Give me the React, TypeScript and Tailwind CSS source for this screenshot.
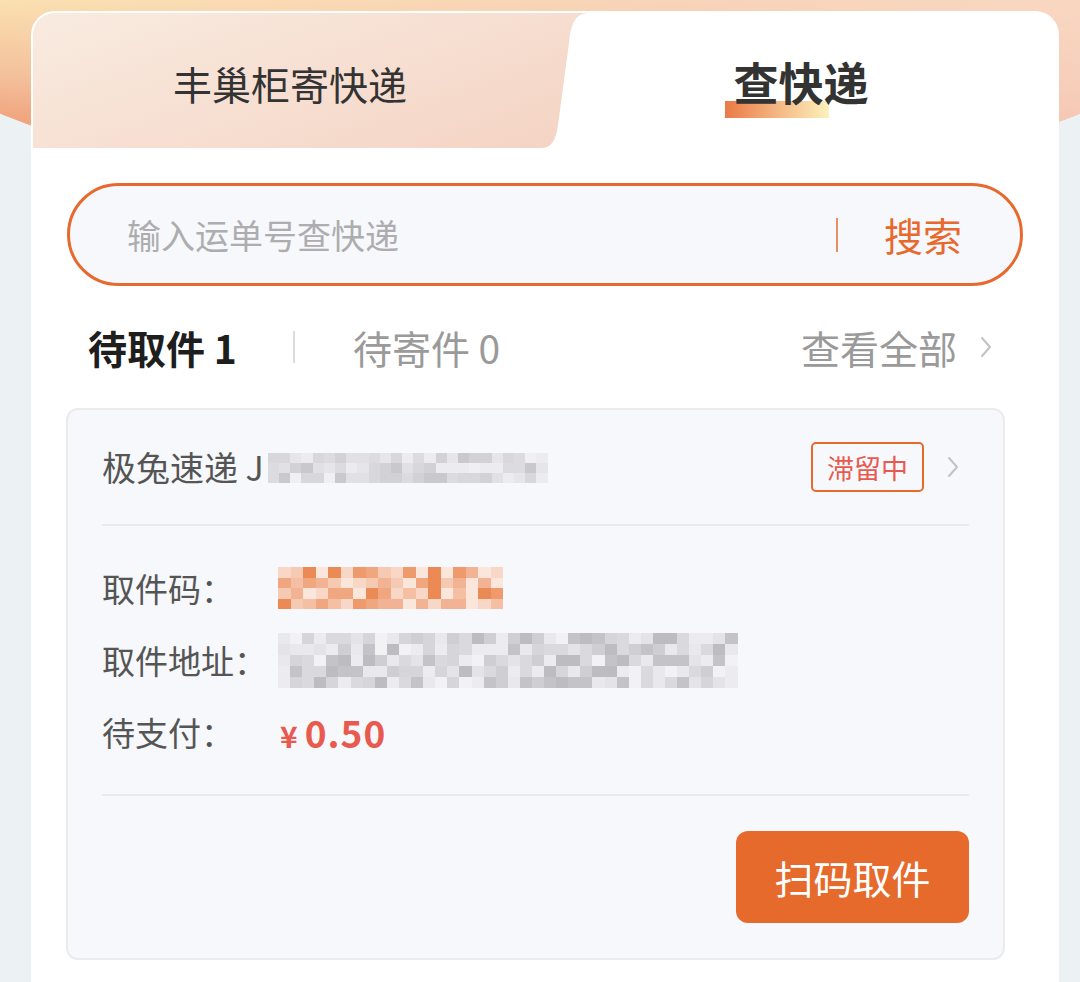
import React from 'react'

const GRIS = ['#e4e4e8', '#d6d6da', '#cfcfd3', '#c4c4c8', '#ececf0', '#dadade', '#bdbdc1', '#e9e9ed', '#f2f2f5']
const GRIS_CLAIR = ['#e6e6ea', '#dcdce0', '#d2d2d6', '#ececf0', '#e1e1e5', '#c9c9cd', '#f0f0f3', '#d8d8dc']
const ORANGE = ['#ee9a6c', '#f0a780', '#f4bfa3', '#f8d7c6', '#ec8a55', '#f2b394', '#fbe6dc', '#f5c9b2']

function Mosaique({ cols, rows, w, h, palette, seed }: { cols: number; rows: number; w: number; h: number; palette: string[]; seed: number }) {
  let s = seed
  const rnd = () => {
    s = (s * 9301 + 49297) % 233280
    return s / 233280
  }
  return (
    <div className="flex flex-col">
      {Array.from({ length: rows }).map((_, r) => (
        <div key={r} className="flex">
          {Array.from({ length: cols }).map((_, c) => (
            <div key={c} style={{ width: w, height: h, background: palette[Math.floor(rnd() * palette.length)] }} />
          ))}
        </div>
      ))}
    </div>
  )
}

function Chevron({ className }: { className?: string }) {
  return (
    <svg width="14" height="24" viewBox="0 0 14 24" fill="none" className={className}>
      <polyline points="3,3 11,12 3,21" stroke="#c2c2c6" strokeWidth="2" strokeLinecap="round" strokeLinejoin="round" />
    </svg>
  )
}

export default function App() {
  return (
    <div className="relative w-[1080px] h-[982px] overflow-hidden bg-[#ecf2f3] font-['Noto_Sans_CJK_SC','Noto_Sans',sans-serif]">
      {/* fond dégradé du haut */}
      <div className="absolute top-[-154px] left-[-100px] right-[-100px] h-[348px] rounded-b-[50%] bg-[linear-gradient(180deg,#fbe2b0_154px,#f3bf98_230px,#ef9f76_275px)]" />
      <div className="absolute top-[-154px] left-[-100px] right-[-100px] h-[348px] rounded-b-[50%] bg-[linear-gradient(90deg,rgba(250,226,180,0)_0%,rgba(246,205,188,0.7)_60%,rgba(248,214,200,0.8)_100%)]" />

      <div className="relative ml-[31px] mr-[21px] mt-[11px] h-[1000px] rounded-[24px] bg-white p-[2px]">
        {/* onglets */}
        <div className="flex h-[135px]">
          <div className="w-[556px] shrink-0 flex items-center justify-center pr-[42px] pt-[6px] bg-[linear-gradient(160deg,#f9ebe0_0%,#f6ddcf_60%,#f4d3c3_100%)] [clip-path:path('M22_0_H556_C544_0_538_8_536_30_L525_112_C523_128_518_135_508_135_H0_V22_C0_10_10_0_22_0_Z')]">
            <span className="text-[39px] leading-none text-[#333]">丰巢柜寄快递</span>
          </div>
          <div className="flex-1 flex items-center justify-center pr-[44px] pt-[1px]">
            <span className="relative text-[45px] leading-none font-bold text-[#333]">
              <span className="absolute left-[-8px] top-[42px] w-[104px] h-[17px] bg-[linear-gradient(90deg,#ea7a45_0%,#f3b07c_45%,#fdf1bd_100%)]" />
              <span className="relative">查快递</span>
            </span>
          </div>
        </div>

        {/* recherche */}
        <div className="mx-[34px] mt-[35px] h-[103px] rounded-full border-[3px] border-[#e8692e] bg-[#f7f8fb] flex items-center pl-[57px] pr-[58px]">
          <span className="flex-1 text-[34px] text-[#adadb0]">输入运单号查快递</span>
          <span className="w-[2px] h-[34px] bg-[#eb8f63]" />
          <span className="ml-[46px] text-[39px] text-[#e8692e]">搜索</span>
        </div>

        {/* filtres */}
        <div className="flex items-center mt-[40px] pl-[55px] pr-[64px] h-[42px]">
          <span className="text-[39px] font-bold text-[#1e1e1e] leading-none">待取件 1</span>
          <span className="ml-[56px] w-[2px] h-[32px] bg-[#dcdcdc]" />
          <span className="ml-[58px] text-[39px] text-[#9a9a9a] leading-none">待寄件 0</span>
          <span className="ml-auto text-[39px] text-[#9a9a9a] leading-none">查看全部</span>
          <Chevron className="ml-[22px]" />
        </div>

        {/* carte colis */}
        <div className="ml-[33px] mr-[52px] mt-[40px] rounded-[12px] border-[2px] border-[#ebebee] bg-[#f7f8fb] px-[34px] pb-[35px]">
          <div className="flex items-center h-[116px] border-b-[2px] border-[#eaeaec]">
            <span className="text-[34px] text-[#555] leading-none">极兔速递 J</span>
            <div className="ml-[4px] mt-[2px]">
              <Mosaique cols={25} rows={3} w={11.2} h={10} palette={GRIS_CLAIR} seed={17} />
            </div>
            <span className="ml-auto w-[113px] h-[50px] rounded-[5px] border-[2px] border-[#e8692e] flex items-center justify-center text-[27px] text-[#e85a4f] leading-none">滞留中</span>
            <Chevron className="ml-[22px] mr-[9px]" />
          </div>

          <div className="flex flex-col pt-[26px] pb-[26px] border-b-[2px] border-[#eaeaec]">
            <div className="flex items-center h-[72px]">
              <span className="w-[176px] text-[33px] text-[#555] leading-none">取件码：</span>
              <Mosaique cols={18} rows={4} w={12.5} h={10.5} palette={ORANGE} seed={5} />
            </div>
            <div className="flex items-center h-[72px]">
              <span className="w-[176px] text-[33px] text-[#555] leading-none">取件地址：</span>
              <Mosaique cols={38} rows={5} w={12.1} h={11} palette={GRIS} seed={41} />
            </div>
            <div className="flex items-center h-[72px]">
              <span className="w-[178px] text-[33px] text-[#555] leading-none">待支付：</span>
              <span className="text-[37px] font-bold text-[#e85a4f] leading-none tracking-[1px]"><span className="text-[30px] mr-[6px]">¥</span>0.50</span>
            </div>
          </div>

          <div className="flex justify-end pt-[35px]">
            <button className="w-[233px] h-[92px] rounded-[12px] bg-[#e66a2c] text-white text-[39px] leading-none">扫码取件</button>
          </div>
        </div>
      </div>
    </div>
  )
}
